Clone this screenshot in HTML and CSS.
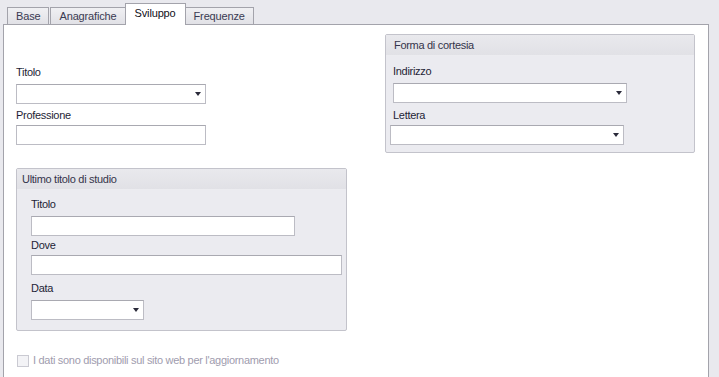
FILE: index.html
```html
<!DOCTYPE html>
<html lang="it">
<head>
    <meta charset="UTF-8">
    <title>Sviluppo</title>
    <link rel="stylesheet" href="styles.css">
</head>
<body>
    <nav class="tabs">
        <div class="tab">Base</div>
        <div class="tab">Anagrafiche</div>
        <div class="tab tab-active">Sviluppo</div>
        <div class="tab">Frequenze</div>
    </nav>
    <main class="panel">
        <div class="top-row">
            <div class="left-col">
                <div class="field">
                    <label>Titolo</label>
                    <div class="input combo w-titolo"><span class="caret"></span></div>
                </div>
                <div class="field">
                    <label>Professione</label>
                    <div class="input w-titolo"></div>
                </div>
            </div>
            <section class="group group-cortesia">
                <h3 class="group-head">Forma di cortesia</h3>
                <div class="group-body">
                    <div class="field">
                        <label>Indirizzo</label>
                        <div class="input combo w-cortesia"><span class="caret"></span></div>
                    </div>
                    <div class="field">
                        <label>Lettera</label>
                        <div class="input combo w-cortesia shift-left"><span class="caret"></span></div>
                    </div>
                </div>
            </section>
        </div>

        <section class="group group-studio">
            <h3 class="group-head">Ultimo titolo di studio</h3>
            <div class="group-body">
                <div class="field">
                    <label>Titolo</label>
                    <div class="input w-studio"></div>
                </div>
                <div class="field">
                    <label>Dove</label>
                    <div class="input w-dove"></div>
                </div>
                <div class="field field-data">
                    <label>Data</label>
                    <div class="input combo w-data"><span class="caret"></span></div>
                </div>
            </div>
        </section>

        <div class="check-row">
            <span class="checkbox"></span>
            <span class="check-label">I dati sono disponibili sul sito web per l'aggiornamento</span>
        </div>
    </main>
</body>
</html>
```

FILE: styles.css
```css
body {
    margin: 0;
    background-color: #e9e9ee;
    font-family: 'Liberation Sans', Arial, sans-serif;
    font-size: 11px;
    letter-spacing: -0.3px;
    color: #1e1e36;
    overflow: hidden;
    height: 377px;
}

/* tab strip */
.tabs {
    display: flex;
    align-items: flex-end;
    padding: 3px 0 0 7px;
    height: 21px;
    position: relative;
    z-index: 1;
}

.tab {
    height: 17px;
    box-sizing: border-box;
    border: 1px solid #a3a3ab;
    border-bottom: none;
    background: linear-gradient(#f0f0f3, #e1e1e6);
    color: #3a3a52;
    padding: 2px 8px 0 8px;
    line-height: 13px;
    letter-spacing: -0.15px;
}

.tab + .tab {
    margin-left: 1px;
}

.tab-active {
    height: 22px;
    margin-bottom: -1px;
    background: #fff;
    color: #101020;
    padding: 3px 9px 0 9px;
}

.tabs .tab-active {
    margin-left: -1px;
}

.tabs .tab-active + .tab {
    margin-left: -1px;
}

/* main white panel */
.panel {
    margin-left: 3px;
    width: 706px;
    height: 360px;
    box-sizing: border-box;
    background: #fff;
    border: 1px solid #a3a3ab;
    padding: 9px 0 0 12px;
}

.top-row {
    display: grid;
    grid-template-columns: 369px 310px;
    align-items: start;
}

.left-col {
    padding-top: 32px;
}

label {
    display: block;
    line-height: 13px;
    margin-bottom: 5px;
}

.field + .field {
    margin-top: 5px;
}

.field + .field label {
    margin-bottom: 3px;
}

.input {
    height: 20px;
    box-sizing: border-box;
    background: #fff;
    border: 1px solid #bcbcc4;
    border-top-color: #a9a9b1;
}

.combo {
    display: flex;
    align-items: center;
    justify-content: flex-end;
    padding-right: 4px;
}

.caret {
    width: 0;
    height: 0;
    border-left: 3px solid transparent;
    border-right: 3px solid transparent;
    border-top: 4px solid #2a2a3a;
}

.w-titolo { width: 190px; }
.w-cortesia { width: 234px; }
.w-studio { width: 264px; }
.w-dove { width: 311px; }
.w-data { width: 113px; }

.shift-left {
    margin-left: -3px;
}

/* group boxes */
.group {
    background: #ebebf0;
    border: 1px solid #c3c3cb;
    border-radius: 2px;
    box-sizing: border-box;
}

.group-head {
    margin: 0;
    font-size: 11px;
    font-weight: normal;
    color: #34344a;
    line-height: 20px;
    height: 20px;
    background: linear-gradient(#e9e9ed, #e1e1e6);
    border-bottom: 1px solid #ececf0;
}

.group-cortesia .group-head {
    padding-left: 8px;
}

.group-cortesia .group-body {
    padding: 9px 0 7px 7px;
}

.group-cortesia .field + .field {
    margin-top: 6px;
}

.group-studio {
    width: 331px;
    margin-top: 15px;
}

.group-studio .group-head {
    padding-left: 5px;
}

.group-studio .group-body {
    padding: 8px 0 10px 14px;
}

.group-studio .field + .field {
    margin-top: 3px;
}

.group-studio .field + .field-data {
    margin-top: 7px;
}

.group-studio .field + .field-data label {
    margin-bottom: 5px;
}

/* disabled checkbox */
.check-row {
    display: flex;
    align-items: center;
    margin-top: 23px;
    margin-left: 1px;
}

.checkbox {
    width: 12px;
    height: 12px;
    box-sizing: border-box;
    border: 1px solid #cacad2;
    background: #f3f3f6;
    margin-right: 4px;
}

.check-label {
    color: #a09cae;
    line-height: 13px;
}
```
